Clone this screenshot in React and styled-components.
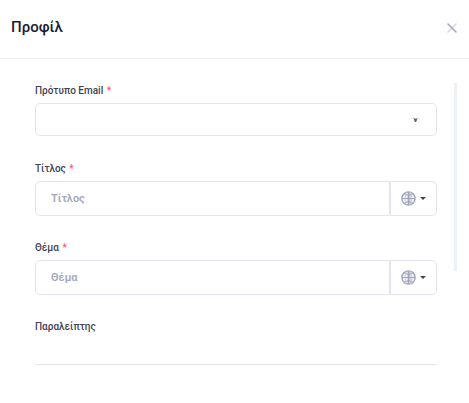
import React from "react";
import styled, { createGlobalStyle } from "styled-components";

const GlobalStyle = createGlobalStyle`
  *, *::before, *::after { box-sizing: border-box; }
  body {
    margin: 0;
    background: #ffffff;
    color: #3f4254;
    font-family: Roboto, "Liberation Sans", sans-serif;
  }
  input, select, button { font-family: inherit; }
`;

const Dialog = styled.section`
  display: flex;
  flex-direction: column;
  background: #ffffff;
`;

const Header = styled.header`
  display: flex;
  align-items: center;
  justify-content: space-between;
  height: 59px;
  padding: 0 12px 0 11px;
  border-bottom: 1px solid #eff2f5;
`;

const Title = styled.h1`
  margin: 0;
  padding-bottom: 4px;
  color: #181c32;
  font-size: 15px;
  font-weight: 500;
  line-height: 20px;
`;

const CloseButton = styled.button`
  display: flex;
  padding: 0;
  margin-bottom: 3px;
  border: 0;
  background: none;
  cursor: pointer;
`;

const Body = styled.div`
  display: flex;
  padding: 24px 12px 24px 35px;
`;

const Form = styled.form`
  flex: 1;
  min-width: 0;
  display: flex;
  flex-direction: column;
  gap: 24px;
  margin-right: 17px;
`;

const ScrollThumb = styled.div`
  width: 3px;
  height: 188px;
  background: #eff2f5;
`;

const Field = styled.div`
  display: flex;
  flex-direction: column;
  gap: 5px;
`;

const Label = styled.label`
  color: #3f4254;
  font-size: 10px;
  font-weight: 500;
  line-height: 15px;
`;

const Required = styled.span`
  margin-left: 1px;
  color: #ff5482;
`;

const SelectWrap = styled.div`
  position: relative;
  padding-bottom: 1px;
`;

const Select = styled.select`
  appearance: none;
  display: block;
  width: 100%;
  height: 33px;
  padding: 0 40px 0 15px;
  border: 1px solid #e4e4f0;
  border-radius: 5px;
  background: #ffffff;
  color: #5e6278;
  font-size: 11px;
  font-weight: 500;
`;

const SelectArrow = styled.svg`
  position: absolute;
  top: 15px;
  right: 19px;
  pointer-events: none;
`;

const InputGroup = styled.div`
  display: flex;
  height: 35px;
`;

const TextInput = styled.input`
  flex: 1;
  min-width: 0;
  padding: 0 15px;
  border: 1px solid #e4e4f0;
  border-radius: 5px 0 0 5px;
  background: #ffffff;
  color: #5e6278;
  font-size: 11px;
  font-weight: 600;
  &::placeholder { color: #a5a7bb; opacity: 1; }
`;

const LanguageButton = styled.button`
  display: flex;
  align-items: center;
  gap: 4px;
  width: 47px;
  padding: 0 10px;
  border: 1px solid #e4e4f0;
  border-radius: 0 5px 5px 0;
  background: #ffffff;
  cursor: pointer;
`;

const RecipientInput = styled.input`
  width: 100%;
  height: 26px;
  padding: 0;
  border: 0;
  border-bottom: 1px solid #e4e4f0;
  background: none;
  color: #5e6278;
  font-size: 11px;
`;

function CloseIcon() {
  return (
    <svg width="10" height="10" viewBox="0 0 10 10" fill="none" strokeLinecap="round" aria-hidden="true">
      <path d="M9 1 1 9" stroke="#d5d7e2" strokeWidth="1.5" />
      <path d="m1 1 8 8" stroke="#a1a5b7" strokeWidth="1.5" />
    </svg>
  );
}

function GlobeIcon() {
  return (
    <svg width="15" height="15" viewBox="0 0 15 15" fill="none" stroke="#a1a5b7" aria-hidden="true">
      <circle cx="7.5" cy="7.5" r="6.6" fill="#f1f2f7" strokeWidth="1.4" />
      <path d="M7.5 1.5h2.2Q12 7.5 9.7 13.5H7.5z" fill="#d9dbe6" stroke="none" />
      <path d="M7.5 1v13" strokeWidth="1.6" />
      <path d="M1 7.5h13" strokeWidth="1.1" />
      <path d="M3.2 3Q7.5 6 11.8 3M3.2 12Q7.5 9 11.8 12" strokeWidth="1" />
      <path d="M5.2 1.3Q2.9 7.5 5.2 13.7M9.8 1.3Q12.1 7.5 9.8 13.7" stroke="#c3c6d4" strokeWidth="0.7" />
    </svg>
  );
}

function CaretIcon() {
  return (
    <svg width="6" height="3" viewBox="0 0 6 3" fill="#3f4254" aria-hidden="true">
      <path d="M0 0h6L3 3z" />
    </svg>
  );
}

function TranslatedField({ id, label }) {
  return (
    <Field>
      <Label htmlFor={id}>
        {label} <Required>*</Required>
      </Label>
      <InputGroup>
        <TextInput id={id} type="text" placeholder={label} required />
        <LanguageButton type="button" aria-label={`Γλώσσα: ${label}`}>
          <GlobeIcon />
          <CaretIcon />
        </LanguageButton>
      </InputGroup>
    </Field>
  );
}

export default function App() {
  return (
    <>
      <GlobalStyle />
      <Dialog role="dialog" aria-labelledby="dialog-title">
        <Header>
          <Title id="dialog-title">Προφίλ</Title>
          <CloseButton type="button" aria-label="Κλείσιμο">
            <CloseIcon />
          </CloseButton>
        </Header>
        <Body>
          <Form>
            <Field>
              <Label htmlFor="template">
                Πρότυπο Email <Required>*</Required>
              </Label>
              <SelectWrap>
                <Select id="template" defaultValue="" required>
                  <option value="" />
                </Select>
                <SelectArrow width="5" height="4" viewBox="0 0 5 4" aria-hidden="true">
                  <path d="M0 0h5v1H0z" fill="#b5b7c6" />
                  <path d="M1 1h3v1L3 4H2L1 2z" fill="#5e6278" />
                </SelectArrow>
              </SelectWrap>
            </Field>
            <TranslatedField id="title" label="Τίτλος" />
            <TranslatedField id="subject" label="Θέμα" />
            <Field>
              <Label htmlFor="recipient">Παραλείπτης</Label>
              <RecipientInput id="recipient" type="text" />
            </Field>
          </Form>
          <ScrollThumb />
        </Body>
      </Dialog>
    </>
  );
}
